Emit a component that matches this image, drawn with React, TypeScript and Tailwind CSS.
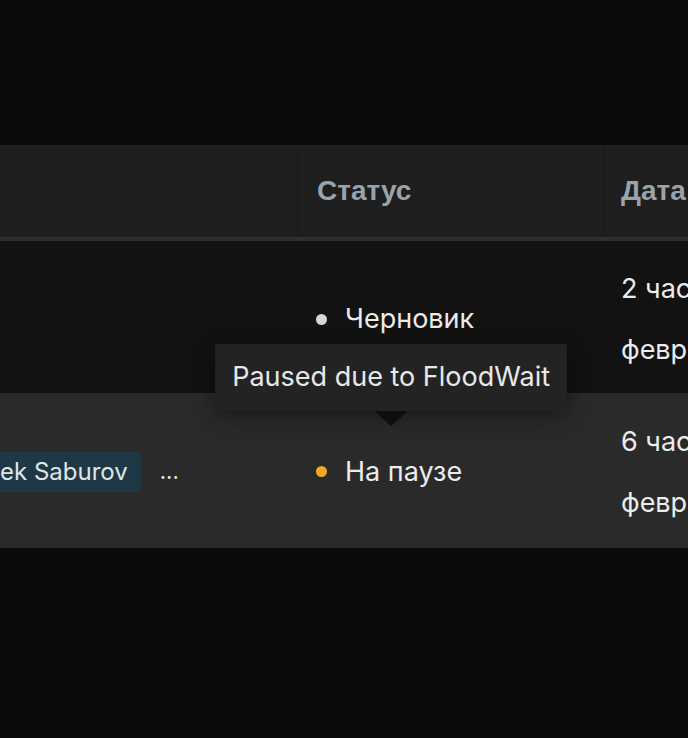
import React from "react";

export default function App() {
  const font = { fontFamily: "Inter, 'Noto Sans', sans-serif" };
  const head = { fontFamily: "'Liberation Sans', Arial, sans-serif" };
  return (
    <div className="w-[688px] h-[738px] bg-[#0b0b0b] overflow-hidden" style={font}>
      <div className="h-[145px]" />
      <div className="w-[1100px]">
        {/* header */}
        <div className="flex h-[92px] bg-[#1e1e1e] border-b-4 border-[#2e2e2e] box-content">
          <div className="w-[298px] border-r border-[#191919]" />
          <div className="w-[307px] border-r border-[#191919] flex items-center pl-[19px]">
            <span className="text-[28px] leading-[40px] font-semibold text-[#9aa3ab]" style={head}>Статус</span>
          </div>
          <div className="flex-1 flex items-center pl-[16px]">
            <span className="text-[28px] leading-[40px] font-semibold text-[#9aa3ab]" style={head}>Дата</span>
          </div>
        </div>
        {/* row 1 */}
        <div className="flex h-[152px] bg-[#121212]">
          <div className="w-[298px]" />
          <div className="w-[307px] flex items-center pl-[18px] pt-[4px]">
            <div className="flex items-center gap-[18px]">
              <span className="w-[11px] h-[11px] rounded-full bg-[#d6d6d6]" />
              <span className="text-[27px] leading-[40px] text-[#ececec]">Черновик</span>
            </div>
          </div>
          <div className="flex-1 flex flex-col justify-center pl-[16px] pt-[4px] text-[27px] text-[#ececec] whitespace-nowrap gap-[21px]">
            <div className="leading-[40px]">2 часа назад</div>
            <div className="leading-[40px]">февраля 2025</div>
          </div>
        </div>
        {/* row 2 */}
        <div className="flex h-[155px] bg-[#2a2a2a]">
          <div className="w-[298px] flex items-center pt-[2px]">
            <span className="h-[40px] flex items-center bg-[#1f3845] pr-[13px] text-[24px] text-[#dfe6ea] rounded-r-[3px]">ek Saburov</span>
            <span className="ml-[19px] text-[22px] text-[#e6e6e6]">...</span>
          </div>
          <div className="w-[307px] flex items-center pl-[18px] pt-[2px]">
            <div className="relative flex items-center gap-[18px]">
              <span className="w-[11px] h-[11px] rounded-full bg-[#f5a623]" />
              <span className="text-[27px] leading-[40px] text-[#ececec]">На паузе</span>
              <div className="absolute left-1/2 -translate-x-1/2 bottom-full mb-[26px] ml-[2px] flex flex-col items-center">
                <div className="h-[67px] px-[17px] flex items-center whitespace-nowrap bg-[#232323] rounded-[3px] text-[27px] text-[#e8e8e8] shadow-[0_4px_24px_rgba(0,0,0,0.45)]">
                  Paused due to FloodWait
                </div>
                <div className="w-0 h-0 border-l-[17px] border-r-[17px] border-t-[15px] border-l-transparent border-r-transparent border-t-[#0e0e0e]" />
              </div>
            </div>
          </div>
          <div className="flex-1 flex flex-col justify-center pl-[16px] pt-[4px] text-[27px] text-[#ececec] whitespace-nowrap gap-[21px]">
            <div className="leading-[40px]">6 часов назад</div>
            <div className="leading-[40px]">февраля 2025</div>
          </div>
        </div>
      </div>
    </div>
  );
}
